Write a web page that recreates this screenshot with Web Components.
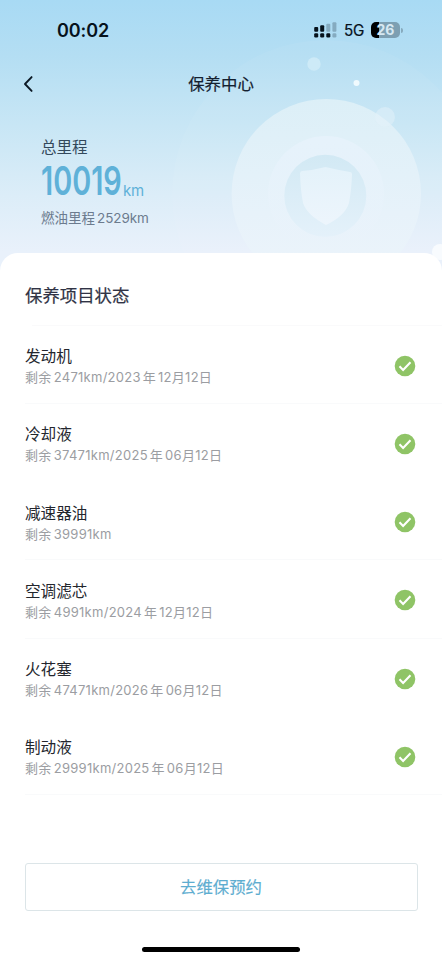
<!DOCTYPE html>
<html lang="zh-CN">
<head>
<meta charset="utf-8">
<title>保养中心</title>
<style>
html,body{margin:0;background:#fff}
body{width:442px;height:960px;overflow:hidden;font-family:Inter,"Noto Sans CJK SC",sans-serif}
</style>
</head>
<body>
<care-page></care-page>
<script>
const define=(name,html,setup)=>customElements.define(name,class extends HTMLElement{
  connectedCallback(){
    if(this.shadowRoot)return;
    const root=this.attachShadow({mode:'open'});
    root.innerHTML=html;
    if(setup)setup(this,root);
  }
});

define('status-bar',`<style>
:host{display:flex;height:60px;box-sizing:border-box;padding:0 39px 0 57px;align-items:center;justify-content:space-between;color:#06121c}
.time{font-size:18px;font-weight:600;letter-spacing:-.1px;line-height:20px;padding-top:1px}
.right{display:flex;align-items:center}
svg{display:block}
.net{font-size:15.2px;font-weight:400;-webkit-text-stroke:.2px;letter-spacing:-.2px;margin:1px 0 0 7px;width:20px;line-height:18px}
.bat{display:flex;align-items:center;margin-left:7px}
.cell{width:29px;height:16px;border-radius:5px;background:linear-gradient(90deg,#000 7.5px,#7d9fb2 7.5px);color:#d7e9f3;font-size:14px;font-weight:700;line-height:16px;text-align:center}
.nub{width:2px;height:5px;margin-left:1px;border-radius:0 2px 2px 0;background:#86aabd}
</style>
<span class="time">00:02</span>
<div class="right">
<svg width="23" height="16" viewBox="0 0 23 16"><g fill="#06121c"><rect x=".2" y="5" width="4" height="4.7" rx="1"/><rect x="6.2" y="3.3" width="4" height="6.4" rx="1"/><rect x=".2" y="11.2" width="4" height="4.3" rx="1.2"/><rect x="6.2" y="11.2" width="4" height="4.3" rx="1.2"/><rect x="12.3" y="11.2" width="4" height="4.3" rx="1.2"/></g><g fill="#85abc0"><rect x="12.3" y="1.8" width="4" height="7.9" rx="1"/><rect x="18.4" y=".2" width="4" height="9.5" rx="1"/><rect x="18.4" y="11.2" width="4" height="4.3" rx="1.2"/></g></svg>
<span class="net">5G</span><div class="bat"><div class="cell">26</div><div class="nub"></div></div></div>`);

define('nav-bar',`<style>
:host{display:grid;grid-template-columns:60px 1fr 60px;height:48px;align-items:center}
svg{display:block;margin-left:22px}
.t{text-align:center;font-size:16.4px;font-weight:400;-webkit-text-stroke:.2px;line-height:24px;color:#14202f}
</style><svg width="12" height="18" viewBox="0 0 12 18"><path d="M9.6 2.1 3 9l6.6 6.9" fill="none" stroke="#0d1a26" stroke-width="1.9" stroke-linecap="round" stroke-linejoin="round"/></svg><span class="t"><slot></slot></span>`);

define('mileage-summary',`<style>
:host{display:block;padding:30px 0 0 41px}
.label{font-size:15.5px;line-height:20px;color:#33485b}
.num{display:flex;align-items:flex-end;height:40px;color:#5fb1d8}
.box{width:82px;height:34px}
.big{display:block;width:116px;font:600 40px/30px Inter,sans-serif;transform:scaleX(.72);transform-origin:0 0;white-space:nowrap;margin-top:2px}
.unit{font-size:15px;line-height:18px;letter-spacing:-.2px;margin:0 0 -2px 0}
.fuel{display:flex;gap:2px;font-size:13.5px;line-height:20px;margin-top:10px;color:#6c7b8e}
.fuel b{font-weight:400;letter-spacing:-.08px}
</style><div class="label">总里程</div><div class="num"><div class="box"><span class="big">10019</span></div><span class="unit">km</span></div><div class="fuel"><span>燃油里程</span><b>2529km</b></div>`);

define('hero-art',`<style>:host{display:block}svg{display:block}</style>
<svg width="442" height="280" viewBox="0 0 442 280">
<defs>
<linearGradient id="sky" x2="0" y2="1"><stop offset="0" stop-color="#a8daf4"/><stop offset=".2" stop-color="#b4def3"/><stop offset=".45" stop-color="#c8e6f5"/><stop offset=".7" stop-color="#dcedf8"/><stop offset=".9" stop-color="#e9f1fb"/></linearGradient>
<linearGradient id="ring" x2="0" y2="1"><stop offset="0" stop-color="#dceff7"/><stop offset=".6" stop-color="#e7f2fa"/><stop offset="1" stop-color="#edf4fb"/></linearGradient>
<linearGradient id="mid" x2="0" y2="1"><stop offset="0" stop-color="#e6f2fb"/><stop offset="1" stop-color="#eaf3fb" stop-opacity=".3"/></linearGradient>
<linearGradient id="core" x2="0" y2="1"><stop offset="0" stop-color="#d2e9f4"/><stop offset="1" stop-color="#e4f1fa"/></linearGradient>
<linearGradient id="shield" x2="0" y2="1"><stop offset="0" stop-color="#e4f2fa"/><stop offset="1" stop-color="#edf5fc"/></linearGradient>
</defs>
<rect width="442" height="280" fill="url(#sky)"/>
<circle cx="326" cy="194" r="154" fill="#fff" opacity=".05"/>
<circle cx="326.3" cy="193.7" r="94.7" fill="url(#ring)"/>
<circle cx="326" cy="194" r="58" fill="url(#mid)"/>
<circle cx="325.3" cy="195.8" r="41" fill="url(#core)"/>
<path d="M302 171Q314 170 325.5 167Q338 170 350 172Q352 172 352 174Q351.5 190 349 203Q345 216 326 225Q307 215 303 203Q300.5 190 300 173.5Q300 171.3 302 171Z" fill="url(#shield)"/>
<circle cx="314" cy="64" r="6.7" fill="#cdeaf7"/>
<circle cx="356.5" cy="83" r="3" fill="#f0fafe"/>
<circle cx="385" cy="117" r="10" fill="#e4f2fa" opacity=".5"/>
<circle cx="440" cy="252" r="8" fill="#f8fbfe"/>
</svg>`);

define('check-badge',`<style>:host{display:block}svg{display:block}</style><svg width="22" height="22" viewBox="0 0 22 22"><circle cx="11" cy="11" r="10.3" fill="#8fc466"/><path d="m5.5 11.3 3.6 3.7 7.4-7.8" fill="none" stroke="#fff" stroke-width="2.1"/></svg>`);

define('care-item',`<style>
:host{display:flex;height:78.3px;box-sizing:border-box;padding:20.5px 26px 0 25px;justify-content:space-between;background:linear-gradient(var(--line,#fff),var(--line,#fff)) 25px 100%/417px 1px no-repeat}
:host([lined]){--line:#f9fafb}
.name{font-size:15.6px;line-height:21px;color:#23262d}
.detail{display:flex;font-size:13px;line-height:20px;color:#9b9da2;white-space:nowrap}
.detail span{display:block;letter-spacing:.27px}
.detail span:nth-child(2){margin-left:2.2px}
.detail span:nth-child(3){margin-left:2px}
.detail span:nth-child(4){margin-left:2px}
check-badge{margin-top:8.5px}
</style><div><div class="name"><slot></slot></div><div class="detail"></div></div><check-badge></check-badge>`,
(el,root)=>{
  const d=root.querySelector('.detail');
  el.getAttribute('detail').split(' ').forEach(t=>{const s=document.createElement('span');s.textContent=t;d.append(s)});
});

define('outline-button',`<style>
:host{display:block}
button{display:block;width:100%;height:48px;border:1.5px solid #dce5e8;border-radius:3px;background:#fff;color:#5eadd0;font:400 16.4px/24px Inter,"Noto Sans CJK SC",sans-serif;-webkit-text-stroke:.15px;padding:0}
</style><button><slot></slot></button>`);

define('care-page',`<style>
:host{display:grid;width:442px;height:960px;grid-template:253px 707px/442px;overflow:hidden;background:#fff}
hero-art{grid-area:1/1;height:280px}
.head{grid-area:1/1;z-index:1}
.sheet{grid-area:2/1;z-index:2;background:#fff;border-radius:18px 18px 0 0;display:flex;flex-direction:column}
h2{margin:0;padding:29px 25px 0;height:72.5px;box-sizing:border-box;font-size:17.4px;line-height:28px;font-weight:400;-webkit-text-stroke:.2px;color:#303345;background:linear-gradient(#fafafb,#fafafb) 32px 100%/410px 1px no-repeat}
outline-button{margin:67.5px 24.5px 0}
.home{width:158px;height:5px;border-radius:3px;background:#000;margin:36px auto 0}
</style>
<hero-art></hero-art>
<div class="head"><status-bar></status-bar><nav-bar>保养中心</nav-bar><mileage-summary></mileage-summary></div>
<div class="sheet"><h2>保养项目状态</h2>
<care-item lined detail="剩余 2471km/2023 年 12月12日">发动机</care-item>
<care-item detail="剩余 37471km/2025 年 06月12日">冷却液</care-item>
<care-item lined detail="剩余 39991km">减速器油</care-item>
<care-item lined detail="剩余 4991km/2024 年 12月12日">空调滤芯</care-item>
<care-item detail="剩余 47471km/2026 年 06月12日">火花塞</care-item>
<care-item lined detail="剩余 29991km/2025 年 06月12日">制动液</care-item>
<outline-button>去维保预约</outline-button><div class="home"></div></div>`);
</script>
</body>
</html>
